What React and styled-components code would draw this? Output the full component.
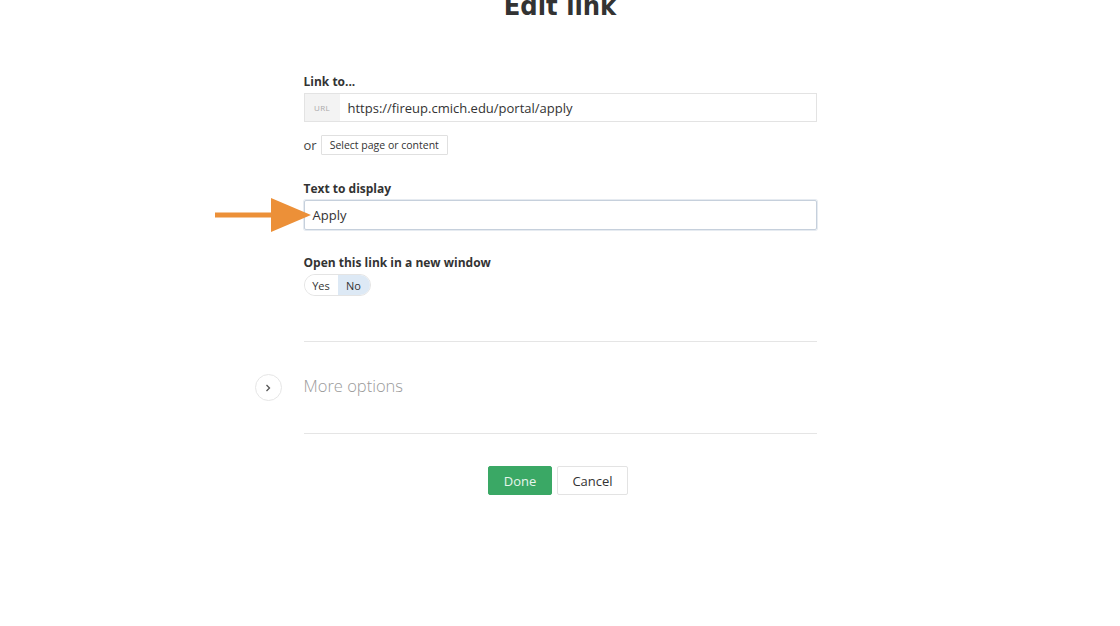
import React, { useState } from 'react';
import styled, { createGlobalStyle } from 'styled-components';

const GlobalStyle = createGlobalStyle`
  html, body {
    margin: 0;
    padding: 0;
    background: #ffffff;
    font-family: 'Open Sans', 'Noto Sans', sans-serif;
    color: #333;
  }
  * { box-sizing: border-box; }
`;

const Page = styled.div`
  width: 1120px;
  height: 626px;
  overflow: hidden;
  display: flex;
  flex-direction: column;
  align-items: center;
`;

const Title = styled.h1`
  margin: -12px 0 0;
  font-family: 'DejaVu Sans Condensed', 'DejaVu Sans', sans-serif;
  font-stretch: condensed;
  font-weight: 700;
  font-size: 27px;
  line-height: 36px;
  color: #333;
`;

const Form = styled.div`
  width: 513px;
  margin-top: 50px;
  display: flex;
  flex-direction: column;
`;

const Label = styled.div`
  font-size: 12px;
  font-weight: 700;
  line-height: 16px;
  color: #333;
  margin-bottom: 3px;
  margin-top: ${p => p.$top || 0}px;
`;

const InputGroup = styled.div`
  display: flex;
  height: 29px;
  border: 1px solid #e3e3e3;
  background: #fff;
`;

const Addon = styled.div`
  width: 35px;
  background: #f3f3f3;
  color: #aaa;
  font-size: 8px;
  letter-spacing: 0.3px;
  display: flex;
  align-items: center;
  justify-content: center;
`;

const InputText = styled.div`
  flex: 1;
  display: flex;
  align-items: center;
  padding-left: 8px;
  font-size: 13px;
  color: #333;
`;

const OrRow = styled.div`
  display: flex;
  align-items: center;
  gap: 4px;
  margin-top: 13px;
  font-size: 13px;
  color: #444;
`;

const SmallButton = styled.button`
  height: 20px;
  padding: 0 8px;
  border: 1px solid #e0e0e0;
  background: #fff;
  font-family: inherit;
  font-size: 10.5px;
  color: #333;
  border-radius: 1px;
  cursor: pointer;
`;

const FieldWrap = styled.div`
  position: relative;
`;

const FocusInput = styled.div`
  height: 30px;
  border: 1px solid #c6d0dc;
  box-shadow: 0 0 0 1px #e6ebf1;
  border-radius: 2px;
  display: flex;
  align-items: center;
  padding-left: 8px;
  font-size: 13px;
  color: #333;
`;

const Arrow = styled.svg`
  position: absolute;
  left: -89px;
  top: -2px;
`;

const Toggle = styled.div`
  display: inline-flex;
  align-self: flex-start;
  height: 22px;
  border: 1px solid #e4e4e4;
  border-radius: 11px;
  overflow: hidden;
`;

const ToggleItem = styled.button`
  border: none;
  padding: 0;
  width: ${p => p.$w}px;
  background: ${p => (p.$active ? '#dde9f5' : '#fff')};
  font-family: inherit;
  font-size: 11px;
  color: #333;
  cursor: pointer;
`;

const Divider = styled.hr`
  border: none;
  border-top: 1px solid #e5e5e5;
  margin: ${p => p.$top}px 0 0;
  width: 100%;
`;

const MoreRow = styled.div`
  position: relative;
  height: 91px;
  padding-bottom: 4px;
  display: flex;
  align-items: center;
  font-size: 16.5px;
  font-weight: 300;
  color: #9a9a9a;
`;

const Circle = styled.div`
  position: absolute;
  left: -49px;
  top: 32px;
  width: 27px;
  height: 27px;
  border: 1px solid #e6e6e6;
  border-radius: 50%;
  display: flex;
  align-items: center;
  justify-content: center;
`;

const Actions = styled.div`
  display: flex;
  justify-content: center;
  gap: 5px;
  margin-top: 32px;
  padding-right: 4px;
`;

const ActionButton = styled.button`
  height: 29px;
  padding: 0;
  width: ${p => p.$w}px;
  border: 1px solid ${p => (p.$primary ? '#3aa865' : '#e3e3e3')};
  background: ${p => (p.$primary ? '#3aa865' : '#fff')};
  color: ${p => (p.$primary ? '#e6f6ec' : '#333')};
  border-radius: 2px;
  font-family: inherit;
  font-size: 13px;
  cursor: pointer;
`;

export default function App() {
  const [newWindow, setNewWindow] = useState(false);
  return (
    <Page>
      <GlobalStyle />
      <Title>Edit link</Title>
      <Form>
        <Label>Link to...</Label>
        <InputGroup>
          <Addon>URL</Addon>
          <InputText>https://fireup.cmich.edu/portal/apply</InputText>
        </InputGroup>
        <OrRow>
          <span>or</span>
          <SmallButton>Select page or content</SmallButton>
        </OrRow>

        <Label $top={26}>Text to display</Label>
        <FieldWrap>
          <FocusInput>Apply</FocusInput>
          <Arrow width="96" height="36" viewBox="0 0 96 36">
            <rect x="0" y="14.5" width="60" height="5" fill="#ec9038" />
            <polygon points="56,0 96,17 56,34" fill="#ec9038" />
          </Arrow>
        </FieldWrap>

        <Label $top={25}>Open this link in a new window</Label>
        <Toggle>
          <ToggleItem $w={33} $active={newWindow} onClick={() => setNewWindow(true)}>Yes</ToggleItem>
          <ToggleItem $w={32} $active={!newWindow} onClick={() => setNewWindow(false)}>No</ToggleItem>
        </Toggle>

        <Divider $top={45} />
        <MoreRow>
          <Circle>
            <svg width="10" height="10" viewBox="0 0 10 10">
              <path d="M3.5 2 L6.5 5 L3.5 8" fill="none" stroke="#555" strokeWidth="1.3" />
            </svg>
          </Circle>
          More options
        </MoreRow>
        <Divider $top={0} />

        <Actions>
          <ActionButton $primary $w={64}>Done</ActionButton>
          <ActionButton $w={71}>Cancel</ActionButton>
        </Actions>
      </Form>
    </Page>
  );
}
